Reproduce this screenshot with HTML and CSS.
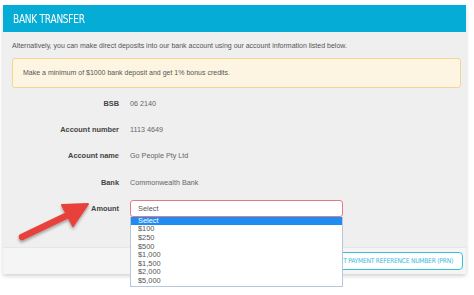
FILE: index.html
```html
<!DOCTYPE html>
<html lang="en">
<head>
    <meta charset="UTF-8">
    <title>Bank Transfer</title>
    <link rel="stylesheet" href="styles.css">
</head>
<body>
    <div class="panel">
        <header class="panel-head">
            <h1>BANK TRANSFER</h1>
        </header>

        <div class="panel-body">
            <p class="intro">Alternatively, you can make direct deposits into our bank account using our account information listed below.</p>

            <div class="alert">Make a minimum of $1000 bank deposit and get 1% bonus credits.</div>

            <div class="row">
                <span class="label">BSB</span>
                <span class="value">06 2140</span>
            </div>
            <div class="row">
                <span class="label">Account number</span>
                <span class="value">1113 4649</span>
            </div>
            <div class="row">
                <span class="label">Account name</span>
                <span class="value">Go People Pty Ltd</span>
            </div>
            <div class="row">
                <span class="label">Bank</span>
                <span class="value">Commonwealth Bank</span>
            </div>
            <div class="row row-amount">
                <span class="label">Amount</span>
                <div class="select-wrap">
                    <div class="select">Select</div>
                    <ul class="options">
                        <li class="active">Select</li>
                        <li>$100</li>
                        <li>$250</li>
                        <li>$500</li>
                        <li>$1,000</li>
                        <li>$1,500</li>
                        <li>$2,000</li>
                        <li>$5,000</li>
                    </ul>
                </div>
            </div>
        </div>

        <footer class="panel-foot">
            <button class="prn-btn">GET PAYMENT REFERENCE NUMBER (PRN)</button>
        </footer>
    </div>

    <!-- annotation arrow -->
    <svg class="arrow" width="90" height="50" viewBox="10 196 90 50">
        <defs>
            <filter id="shadow" x="-20%" y="-20%" width="140%" height="160%">
                <feDropShadow dx="0" dy="2" stdDeviation="1.5" flood-color="#000" flood-opacity="0.35"/>
            </filter>
        </defs>
        <g filter="url(#shadow)" fill="#e8403b" stroke="#e8403b">
            <line x1="22" y1="237" x2="70" y2="214" stroke-width="6.5" stroke-linecap="round"/>
            <polygon points="88,204 62,205 73,226" stroke-width="2" stroke-linejoin="round"/>
        </g>
    </svg>
</body>
</html>
```

FILE: styles.css
```css
html {
    min-height: 295px;
}

body {
    margin: 0;
    padding: 5px 8px 0 3px;
    min-height: 290px;
    background: #fff;
    font-family: "Liberation Sans", Arial, sans-serif;
    color: #555;
}

.panel {
    background-color: #efefef;
    box-shadow: 0 2px 4px rgba(0,0,0,0.18);
}

.panel-head {
    background-color: #05acd6;
    height: 27px;
    display: flex;
    align-items: center;
    padding-left: 10px;
}

.panel-head h1 {
    margin: 0;
    color: #fff;
    font-family: "DejaVu Sans Condensed", "DejaVu Sans", sans-serif;
    font-stretch: condensed;
    font-weight: normal;
    font-size: 12.5px;
    letter-spacing: -0.3px;
    transform: scaleX(0.8);
    transform-origin: left center;
}

.panel-body {
    padding: 9px 5px 26px 9px;
}

.intro {
    margin: 0 0 7px 0;
    font-size: 7px;
    line-height: 10px;
    color: #555;
}

.alert {
    background-color: #fdf5e1;
    border: 1px solid #f1d593;
    border-radius: 3px;
    padding: 0 10px;
    height: 28px;
    line-height: 28px;
    font-size: 7px;
    color: #555;
    margin-bottom: 2px;
}

.row {
    display: flex;
    align-items: center;
    height: 26.3px;
}

.label {
    width: 107px;
    text-align: right;
    font-weight: bold;
    font-size: 7.4px;
    color: #444;
}

.value {
    margin-left: 11px;
    font-size: 7.2px;
    color: #666;
}

.select-wrap {
    position: relative;
    margin-left: 11px;
    width: 213px;
}

.select {
    height: 15px;
    border: 1px solid #e27b86;
    border-radius: 3px;
    background: #fff;
    font-size: 7.4px;
    line-height: 15px;
    padding-left: 7px;
    color: #555;
}

.options {
    position: absolute;
    top: 17px;
    left: 0;
    width: 211px;
    margin: 0;
    padding: 0;
    list-style: none;
    background: #fff;
    border: 1px solid #b9c6da;
    border-top: none;
    z-index: 2;
}

.options li {
    height: 8.6px;
    line-height: 8.6px;
    font-size: 7.4px;
    padding-left: 7px;
    color: #555;
}

.options li.active {
    background-color: #1f8cf3;
    color: #fff;
}

.panel-foot {
    background-color: #f5f5f5;
    border-top: 1px solid #e6e6e6;
    height: 26px;
    display: flex;
    align-items: center;
    justify-content: flex-end;
    padding-right: 3px;
}

.prn-btn {
    height: 18px;
    padding: 0 9px;
    background: #fff;
    border: 1px solid #38bfe0;
    border-radius: 4px;
    color: #3cb8dc;
    font-family: "DejaVu Sans Condensed", "DejaVu Sans", sans-serif;
    font-stretch: condensed;
    font-size: 6.6px;
    letter-spacing: -0.2px;
}

.arrow {
    position: absolute;
    left: 10px;
    top: 196px;
}
```
